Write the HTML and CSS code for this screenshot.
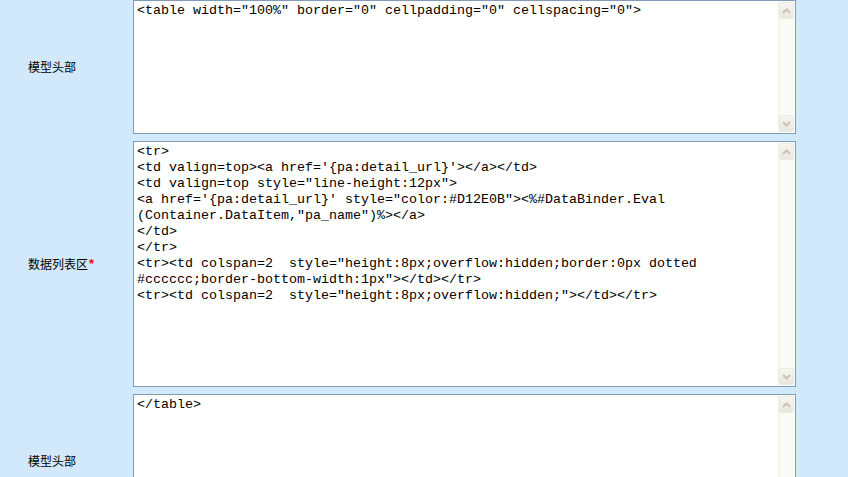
FILE: index.html
```html
<!DOCTYPE html>
<html lang="zh-CN">
<head>
  <meta charset="UTF-8">
  <meta name="viewport" content="width=device-width, initial-scale=1.0">
  <title>模型设置</title>
  <link rel="stylesheet" href="styles.css">
</head>
<body>
<div class="form">
  <div class="label">模型头部</div>
  <div class="editor short">
    <textarea class="code" wrap="off" readonly>&lt;table width="100%" border="0" cellpadding="0" cellspacing="0"&gt;</textarea>
    <div class="scrollbar">
      <span class="sb-btn"><svg width="9" height="6" viewBox="0 0 9 6"><path d="M1 5 L4.5 1.5 L8 5" /></svg></span>
      <span class="sb-btn"><svg width="9" height="6" viewBox="0 0 9 6"><path d="M1 1 L4.5 4.5 L8 1" /></svg></span>
    </div>
  </div>

  <div class="label">数据列表区<span class="req">*</span></div>
  <div class="editor tall">
    <textarea class="code" wrap="off" readonly>&lt;tr&gt;
&lt;td valign=top&gt;&lt;a href='{pa:detail_url}'&gt;&lt;/a&gt;&lt;/td&gt;
&lt;td valign=top style="line-height:12px"&gt;
&lt;a href='{pa:detail_url}' style="color:#D12E0B"&gt;&lt;%#DataBinder.Eval
(Container.DataItem,"pa_name")%&gt;&lt;/a&gt;
&lt;/td&gt;
&lt;/tr&gt;
&lt;tr&gt;&lt;td colspan=2  style="height:8px;overflow:hidden;border:0px dotted
#cccccc;border-bottom-width:1px"&gt;&lt;/td&gt;&lt;/tr&gt;
&lt;tr&gt;&lt;td colspan=2  style="height:8px;overflow:hidden;"&gt;&lt;/td&gt;&lt;/tr&gt;</textarea>
    <div class="scrollbar">
      <span class="sb-btn"><svg width="9" height="6" viewBox="0 0 9 6"><path d="M1 5 L4.5 1.5 L8 5" /></svg></span>
      <span class="sb-btn"><svg width="9" height="6" viewBox="0 0 9 6"><path d="M1 1 L4.5 4.5 L8 1" /></svg></span>
    </div>
  </div>

  <div class="label">模型头部</div>
  <div class="editor short">
    <textarea class="code" wrap="off" readonly>&lt;/table&gt;</textarea>
    <div class="scrollbar">
      <span class="sb-btn"><svg width="9" height="6" viewBox="0 0 9 6"><path d="M1 5 L4.5 1.5 L8 5" /></svg></span>
      <span class="sb-btn"><svg width="9" height="6" viewBox="0 0 9 6"><path d="M1 1 L4.5 4.5 L8 1" /></svg></span>
    </div>
  </div>
</div>
</body>
</html>
```

FILE: styles.css
```css
body {
  margin: 0;
  background-color: #d2e8fb;
  font-family: "Noto Sans CJK SC", sans-serif;
  font-size: 12px;
  color: #000;
}

.form {
  display: grid;
  grid-template-columns: 133px 663px;
  row-gap: 7px;
}

.label {
  display: flex;
  align-items: center;
  padding-left: 28px;
  line-height: 14px;
}

.req {
  color: #f00;
  font-family: "Liberation Sans", sans-serif;
  font-weight: bold;
  font-size: 13px;
  margin-left: 1px;
}

.editor {
  display: flex;
  box-sizing: border-box;
  border: 1px solid #7f9db9;
  background-color: #fff;
}

.editor.short {
  height: 134px;
}

.editor.tall {
  height: 246px;
}

.code {
  flex: 1;
  margin: 0;
  border: 0;
  padding: 2px 3px;
  resize: none;
  overflow: hidden;
  outline: none;
  white-space: pre;
  font-family: "Liberation Mono", "Courier New", monospace;
  font-size: 13.33px;
  line-height: 16px;
  color: #000;
  background-color: #fff;
}

.scrollbar {
  width: 17px;
  display: flex;
  flex-direction: column;
  justify-content: space-between;
  background-color: #fbfbf6;
  border-left: 1px solid #f1f0ea;
  box-sizing: border-box;
}

.sb-btn {
  display: flex;
  align-items: center;
  justify-content: center;
  height: 15px;
  margin: 1px 1px 1px 0;
  border: 1px solid #ecebe4;
  border-radius: 2px;
  background: linear-gradient(#f6f5f0, #e8e7df);
}

.sb-btn path {
  fill: none;
  stroke: #c6c4b8;
  stroke-width: 2;
}
```
